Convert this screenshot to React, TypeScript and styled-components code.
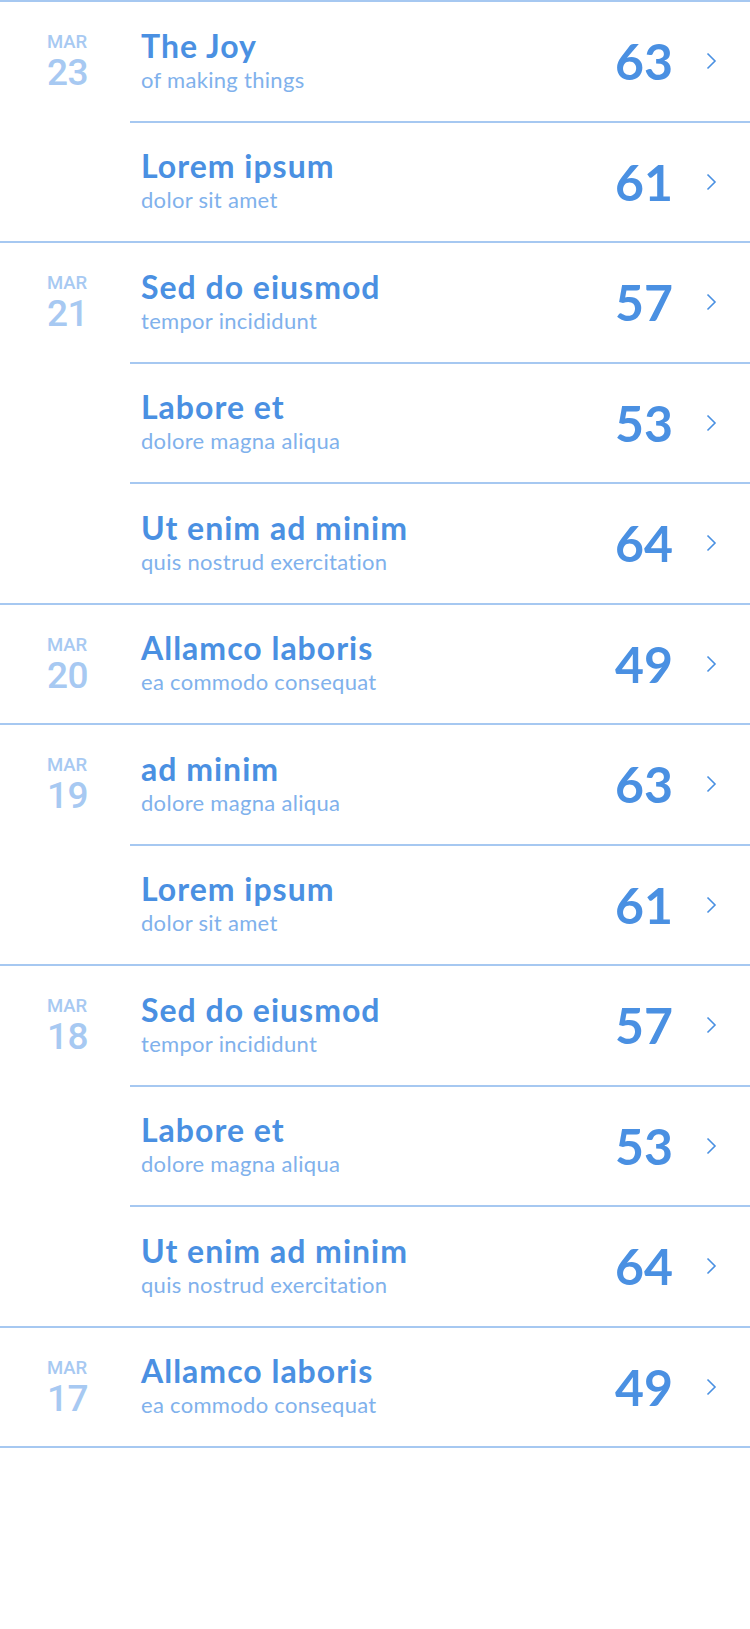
import React from "react";
import styled, { createGlobalStyle } from "styled-components";

const GlobalStyle = createGlobalStyle`
  html, body {
    margin: 0;
    padding: 0;
    background: #ffffff;
  }
  body {
    font-family: "Lato", "Noto Sans", sans-serif;
    -webkit-font-smoothing: antialiased;
  }
`;

type Entry = { title: string; sub: string; score: number };
type Day = { month: string; day: string; entries: Entry[] };

const days: Day[] = [
  {
    month: "MAR",
    day: "23",
    entries: [
      { title: "The Joy", sub: "of making things", score: 63 },
      { title: "Lorem ipsum", sub: "dolor sit amet", score: 61 },
    ],
  },
  {
    month: "MAR",
    day: "21",
    entries: [
      { title: "Sed do eiusmod", sub: "tempor incididunt", score: 57 },
      { title: "Labore et", sub: "dolore magna aliqua", score: 53 },
      { title: "Ut enim ad minim", sub: "quis nostrud exercitation", score: 64 },
    ],
  },
  {
    month: "MAR",
    day: "20",
    entries: [{ title: "Allamco laboris", sub: "ea commodo consequat", score: 49 }],
  },
  {
    month: "MAR",
    day: "19",
    entries: [
      { title: "ad minim", sub: "dolore magna aliqua", score: 63 },
      { title: "Lorem ipsum", sub: "dolor sit amet", score: 61 },
    ],
  },
  {
    month: "MAR",
    day: "18",
    entries: [
      { title: "Sed do eiusmod", sub: "tempor incididunt", score: 57 },
      { title: "Labore et", sub: "dolore magna aliqua", score: 53 },
      { title: "Ut enim ad minim", sub: "quis nostrud exercitation", score: 64 },
    ],
  },
  {
    month: "MAR",
    day: "17",
    entries: [{ title: "Allamco laboris", sub: "ea commodo consequat", score: 49 }],
  },
];

const LINE = "#a6c8f1";

const List = styled.div`
  width: 750px;
  border-top: 2px solid ${LINE};
`;

const Group = styled.section`
  display: flex;
  border-bottom: 2px solid ${LINE};
`;

const DateCol = styled.div`
  width: 130px;
  flex-shrink: 0;
  box-sizing: border-box;
  padding: 31px 0 0 47px;
  display: flex;
  flex-direction: column;
  font-family: "Roboto", "Liberation Sans", Arial, sans-serif;
  font-weight: 500;
  color: #a7c9f2;
`;

const Month = styled.div`
  font-size: 18.5px;
  line-height: 18px;
`;

const DayNum = styled.div`
  font-size: 37px;
  line-height: 37px;
  margin-top: 3px;
  letter-spacing: -0.5px;
`;

const Entries = styled.div`
  flex: 1;
  display: flex;
  flex-direction: column;
`;

const Row = styled.div<{ $divider: boolean }>`
  height: 118.5px;
  display: flex;
  align-items: center;
  border-top: ${(p) => (p.$divider ? `2px solid ${LINE}` : "none")};
`;

const Text = styled.div`
  flex: 1;
  padding-left: 11px;
  display: flex;
  flex-direction: column;
`;

const Title = styled.div`
  font-size: 32px;
  line-height: 36px;
  font-weight: 700;
  letter-spacing: 1px;
  color: #4a90e2;
`;

const Sub = styled.div`
  font-size: 22px;
  line-height: 31px;
  font-weight: 400;
  letter-spacing: 0.3px;
  color: #80b1ec;
`;

const Score = styled.div`
  width: 91px;
  font-size: 50px;
  line-height: 50px;
  font-weight: 700;
  color: #4a90e2;
  font-variant-numeric: tabular-nums;
`;

const Chevron = styled.svg`
  width: 11px;
  height: 18px;
  margin-right: 33px;
  flex-shrink: 0;
`;

export default function App() {
  return (
    <>
      <GlobalStyle />
      <List>
        {days.map((d, gi) => (
          <Group key={gi}>
            <DateCol>
              <Month>{d.month}</Month>
              <DayNum>{d.day}</DayNum>
            </DateCol>
            <Entries>
              {d.entries.map((e, i) => (
                <Row key={i} $divider={i > 0}>
                  <Text>
                    <Title>{e.title}</Title>
                    <Sub>{e.sub}</Sub>
                  </Text>
                  <Score>{e.score}</Score>
                  <Chevron viewBox="0 0 11 18">
                    <polyline
                      points="1.5,1.5 9,9 1.5,16.5"
                      fill="none"
                      stroke="#4a90e2"
                      strokeWidth="1.6"
                    />
                  </Chevron>
                </Row>
              ))}
            </Entries>
          </Group>
        ))}
      </List>
    </>
  );
}
